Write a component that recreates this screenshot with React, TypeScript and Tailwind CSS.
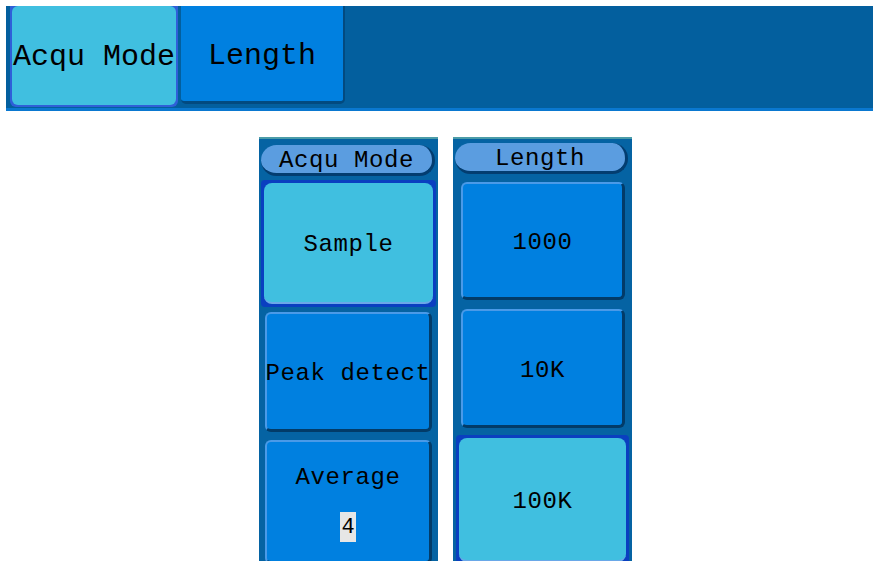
import React from "react";

const mono = { fontFamily: '"Liberation Mono", "DejaVu Sans Mono", monospace' };

function TopBar() {
  return (
    <div className="ml-[6px] mt-[6px] h-[105px] w-[867px] bg-[#035f9e] border-b-[3px] border-[#0a78d0] flex items-start">
      <div className="w-[4px] h-full" />
      <div className="w-[168px] h-[101px] rounded-b-[6px] bg-[#2f5fd8] p-[2px] pt-0">
        <div className="w-full h-full rounded-[6px] bg-[#40bfe0] flex items-center justify-center text-[30px] text-black whitespace-nowrap pt-[4px]" style={mono}>
          Acqu Mode
        </div>
      </div>
      <div className="w-[3px]" />
      <div className="w-[164px] h-[98px] rounded-b-[5px] bg-[#0080e0] border-r-[2px] border-b-[3px] border-[#024a80] flex items-center justify-center text-[30px] text-black pt-[6px]" style={mono}>
        Length
      </div>
    </div>
  );
}

function Header({ label }: { label: string }) {
  return (
    <div
      className="h-[31px] rounded-full bg-[#5b9de0] border-b-[3px] border-r-[3px] border-[#033d70] flex items-center justify-center text-[24px] tracking-[0.6px] text-black whitespace-nowrap pt-[3px]"
      style={mono}
    >
      {label}
    </div>
  );
}

function Btn({ h, children, mx = "mx-[5px]", start = false }: { h: string; children: React.ReactNode; mx?: string; start?: boolean }) {
  return (
    <div
      className={`${h} ${mx} rounded-[6px] bg-[#0080e0] border-t-[2px] border-l-[2px] border-[#4a9ae8] border-r-[3px] border-b-[3px] border-r-[#023b68] border-b-[#023b68] flex flex-col items-center ${start ? "justify-start pt-[18px]" : "justify-center pt-[5px]"} text-[24px] tracking-[0.6px] text-black whitespace-nowrap`}
      style={mono}
    >
      {children}
    </div>
  );
}

function Active({ h, children }: { h: string; children: React.ReactNode }) {
  return (
    <div className={`${h} bg-[#0a3fc0] p-[3px] rounded-[4px]`}>
      <div
        className="w-full h-full rounded-[8px] bg-[#40bfe0] border-b-[2px] border-[#6aa8e8] flex items-center justify-center text-[24px] tracking-[0.6px] text-black whitespace-nowrap pt-[5px]"
        style={mono}
      >
        {children}
      </div>
    </div>
  );
}

export default function App() {
  return (
    <div className="w-[873px] h-[561px] bg-white overflow-hidden">
      <TopBar />
      <div className="flex pl-[259px] gap-[15px] mt-[26px]">
        <div className="w-[179px] h-[430px] bg-[#0563a3] border-t-[2px] border-[#4c9ca8] flex flex-col">
          <div className="pl-[2px] pr-[3px] pt-[6px]">
            <Header label="Acqu Mode" />
          </div>
          <div className="px-[2px] mt-[4px]">
            <Active h="h-[127px]">Sample</Active>
          </div>
          <div className="mt-[5px]">
            <Btn h="h-[120px]" mx="ml-[6px] mr-[6px]">Peak detect</Btn>
          </div>
          <div className="mt-[8px]">
            <Btn h="h-[124px]" mx="ml-[6px] mr-[6px]" start>
              <div className="h-[36px] flex items-center">Average</div>
              <div className="mt-[16px] bg-[#e6e6e6] w-[16px] h-[30px] flex items-center justify-center text-[22px] tracking-normal">4</div>
            </Btn>
          </div>
        </div>
        <div className="w-[179px] h-[430px] bg-[#0563a3] border-t-[2px] border-[#4c9ca8] flex flex-col">
          <div className="pl-[2px] pr-[4px] pt-[4px]">
            <Header label="Length" />
          </div>
          <div className="mt-[8px]">
            <Btn h="h-[118px]" mx="ml-[8px] mr-[7px]">1000</Btn>
          </div>
          <div className="mt-[9px]">
            <Btn h="h-[119px]" mx="ml-[8px] mr-[7px]">10K</Btn>
          </div>
          <div className="px-[3px] mt-[7px]">
            <Active h="h-[130px]">100K</Active>
          </div>
        </div>
      </div>
    </div>
  );
}
